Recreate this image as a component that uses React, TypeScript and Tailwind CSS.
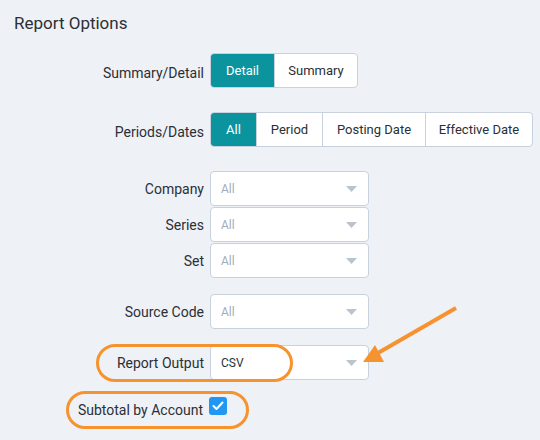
import React from 'react';

const FONT = "font-['Roboto','Liberation_Sans',sans-serif]";

const Row: React.FC<{ label: string; className?: string; labelClassName?: string; children: React.ReactNode }> = ({
  label,
  className = '',
  labelClassName = '',
  children,
}) => (
  <div className={`flex items-center ${className}`}>
    <div className={`w-[204px] shrink-0 pr-0 text-right text-[14px] leading-[20px] text-[#2b2f36] ${labelClassName}`}>
      {label}
    </div>
    <div className="ml-[6px]">{children}</div>
  </div>
);

const Segmented: React.FC<{ options: { label: string; width: string }[]; active: number }> = ({ options, active }) => (
  <div className="flex h-[35px] overflow-hidden rounded-[4px] border border-[#c7d2de] bg-white">
    {options.map((option, index) => (
      <div
        key={option.label}
        className={`flex items-center justify-center text-[13px] ${option.width} ${
          index > 0 ? 'border-l border-[#c7d2de]' : ''
        } ${index === active ? 'bg-[#0b949e] text-white' : 'text-[#2b2f36]'}`}
      >
        {option.label}
      </div>
    ))}
  </div>
);

const Select: React.FC<{ value: string; placeholder?: boolean }> = ({ value, placeholder = true }) => (
  <div className="flex h-[35px] w-[159px] items-center justify-between rounded-[4px] border border-[#c7d2de] bg-white pl-[10px] pr-[11px]">
    <span className={`text-[12px] ${placeholder ? 'text-[#a3adb8]' : 'text-[#2b2f36]'}`}>{value}</span>
    <svg width="11" height="6" viewBox="0 0 11 6">
      <path d="M0 0 L11 0 L5.5 6 Z" fill="#b9c4cf" />
    </svg>
  </div>
);

export default function App() {
  return (
    <div className={`relative h-[440px] w-[540px] overflow-hidden bg-[#eef1f6] ${FONT}`}>
      <div className="pl-[14px] pt-[11px] text-[17px] leading-[24px] text-[#2b2f36]">Report Options</div>

      <Row label="Summary/Detail" className="mt-[18px]" labelClassName="mt-[4px]">
        <Segmented
          active={0}
          options={[
            { label: 'Detail', width: 'w-[63px]' },
            { label: 'Summary', width: 'w-[83px]' },
          ]}
        />
      </Row>

      <Row label="Periods/Dates" className="mt-[24px]" labelClassName="mt-[4px]">
        <Segmented
          active={0}
          options={[
            { label: 'All', width: 'w-[45px]' },
            { label: 'Period', width: 'w-[66px]' },
            { label: 'Posting Date', width: 'w-[103px]' },
            { label: 'Effective Date', width: 'w-[107px]' },
          ]}
        />
      </Row>

      <div className="mt-[24px] flex flex-col gap-[1px]">
        <Row label="Company">
          <Select value="All" />
        </Row>
        <Row label="Series">
          <Select value="All" />
        </Row>
        <Row label="Set">
          <Select value="All" />
        </Row>
      </div>

      <Row label="Source Code" className="mt-[16px]">
        <Select value="All" />
      </Row>

      <Row label="Report Output" className="mt-[16px]">
        <Select value="CSV" placeholder={false} />
      </Row>

      <div className="mt-[17px] flex items-start">
        <div className="mt-[3px] w-[203px] shrink-0 text-right text-[14px] leading-[20px] text-[#2b2f36]">
          Subtotal by Account
        </div>
        <div className="ml-[6px] flex h-[18px] w-[18px] items-center justify-center rounded-[3px] bg-[#2196f3]">
          <svg width="12" height="10" viewBox="0 0 12 10">
            <path d="M1.5 5 L4.5 8 L10.5 1.5" fill="none" stroke="white" strokeWidth="2" strokeLinecap="round" strokeLinejoin="round" />
          </svg>
        </div>
      </div>

      {/* annotation overlays */}
      <div className="pointer-events-none absolute left-[96px] top-[344px] h-[38px] w-[197px] rounded-full border-[3px] border-[#f7932f]" />
      <div className="pointer-events-none absolute left-[66px] top-[391px] h-[38px] w-[183px] rounded-full border-[3px] border-[#f7932f]" />
      <svg className="pointer-events-none absolute left-0 top-0" width="540" height="440" viewBox="0 0 540 440">
        <line x1="456" y1="308" x2="378" y2="353" stroke="#f7932f" strokeWidth="4" strokeLinecap="butt" />
        <polygon points="363,362 375,345 384,362" fill="#f7932f" />
      </svg>
    </div>
  );
}
